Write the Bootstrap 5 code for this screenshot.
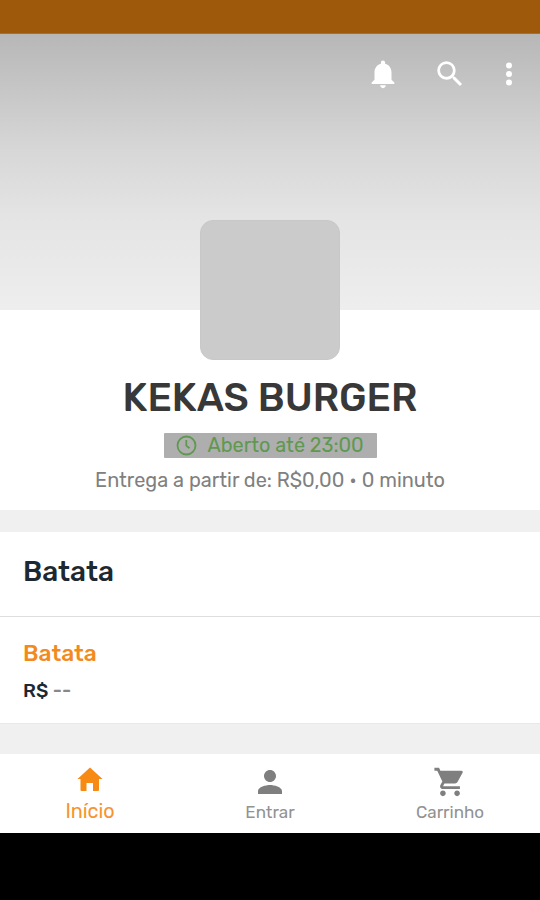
<!DOCTYPE html>
<html lang="pt-BR">
<head>
<meta charset="utf-8">
<meta name="viewport" content="width=device-width, initial-scale=1">
<title>Kekas Burger</title>
<link href="https://cdn.jsdelivr.net/npm/bootstrap@5.3.0/dist/css/bootstrap.min.css" rel="stylesheet">
<style>
body{font-family:Rubik,Roboto,sans-serif;background:#f0f0f0;height:900px;overflow:hidden}
svg{display:block;fill:currentColor;flex:none}
.statusbar{height:34px;background:#9e5a0a;border-bottom:1px solid #a1703b}
.cover{height:276px;background:linear-gradient(#b7b7b7 0,#c6c6c6 20%,#d7d7d7 42%,#e4e4e4 66%,#eee 100%);padding:22.500px 14px 0 0}
.tools svg:first-child{margin-right:33px}
.tools svg:last-child{margin-left:25px}
.shop{height:200px}
.logo{width:140px;height:140px;border-radius:13px;background:#cbcbcb;margin-top:-90px;border:1px solid #c8c8c8;flex:none}
.shop-name{font-size:39.3px;line-height:44px;font-weight:500;color:#383838;margin-top:16px}
.open{width:213px;height:25px;background:#aeaeae;color:#5f9850;font-size:19.850px;line-height:25px;margin-top:13px;padding-left:12px;border-radius:1px;gap:11px}
.delivery{font-size:19.900px;line-height:24px;color:#808080;margin-top:10px}
.menu{margin-top:22px;height:192px;color:#1c2932;border-bottom:1px solid #e8e8e8}
.menu-title{height:85px;border-bottom:1px solid #dedede;font-size:28px;font-weight:500;padding:0 0 5px 23px}
.dish{padding:24px 0 0 23px}
.dish-name{color:#f38a1e;font-size:22.700px;line-height:26px;font-weight:500}
.dish-price{font-size:19.200px;line-height:24px;font-weight:500;margin-top:12px}
.dish-price span{color:#888}
.tabs{margin-top:30px;height:79px;font-size:17px;color:#7f7f7f}
.tabs span{line-height:22px;color:#929292}
.tabs .tab-on{color:#f68a15;font-size:19.800px;padding-top:10px}
.tabs .tab-on span{margin-top:8px;color:#f7942c}
.tab-user{padding-top:10px}
.tab-user span{margin-top:1px}
.tab-cart{padding-top:11px}
.tab-cart span{margin-top:2px}
.system{height:67px;background:#000}
</style>
</head>
<body class="d-flex flex-column">
<div class="statusbar flex-shrink-0"></div>
<header class="cover flex-shrink-0">
  <div class="tools d-flex justify-content-end text-white">
    <svg width="34" height="34" viewBox="0 0 24 24"><path d="M12 22c1.100 0 2-.9 2-2h-4c0 1.100.9 2 2 2zm6-6v-5c0-3.070-1.630-5.640-4.500-6.320V4c0-.83-.67-1.500-1.500-1.500s-1.500.67-1.500 1.500v.68C7.640 5.360 6 7.920 6 11v5l-2 2v1h16v-1l-2-2z"/></svg>
    <svg width="34" height="34" viewBox="0 0 24 24"><path d="M15.500 14h-.79l-.28-.27A6.470 6.470 0 0 0 16 9.500 6.500 6.500 0 1 0 9.500 16c1.610 0 3.090-.59 4.230-1.570l.27.28v.79l5 4.990L20.490 19l-4.990-5zm-6 0C7.010 14 5 11.990 5 9.500S7.010 5 9.500 5 14 7.010 14 9.500 11.990 14 9.500 14z"/></svg>
    <svg width="34" height="34" viewBox="0 0 24 24"><circle cx="12" cy="6" r="2.100"/><circle cx="12" cy="12" r="2.100"/><circle cx="12" cy="18" r="2.100"/></svg>
  </div>
</header>
<section class="shop bg-white d-flex flex-column align-items-center flex-shrink-0">
  <div class="logo"></div>
  <h1 class="shop-name mb-0">KEKAS BURGER</h1>
  <div class="open d-flex align-items-center">
    <svg width="21" height="21" viewBox="0 0 21 21" stroke="currentColor" stroke-width="1.800"><circle cx="10.500" cy="10.500" r="9" fill="none"/><path d="M10.300 5v5.600l3.200 2.600" fill="none"/></svg>
    <span>Aberto até 23:00</span>
  </div>
  <div class="delivery">Entrega a partir de: R$0,00 • 0 minuto</div>
</section>
<main class="menu bg-white flex-shrink-0">
  <h2 class="menu-title d-flex align-items-center mb-0">Batata</h2>
  <div class="dish">
    <div class="dish-name">Batata</div>
    <div class="dish-price">R$ <span>--</span></div>
  </div>
</main>
<nav class="tabs bg-white row g-0 text-center flex-shrink-0">
  <div class="col tab-on d-flex flex-column align-items-center">
    <svg width="28" height="28" viewBox="0 0 28 28"><path d="M14 3.500 1.500 15h3v11q0 1 1 1h5v-8h6.500v8h5q1 0 1-1V15h3.500z"/></svg>
    <span>Início</span>
  </div>
  <div class="col tab-user d-flex flex-column align-items-center">
    <svg width="36" height="36" viewBox="0 0 24 24"><path d="M12 12c2.210 0 4-1.790 4-4s-1.790-4-4-4-4 1.790-4 4 1.790 4 4 4zm0 2c-2.670 0-8 1.340-8 4v2h16v-2c0-2.660-5.330-4-8-4z"/></svg>
    <span>Entrar</span>
  </div>
  <div class="col tab-cart d-flex flex-column align-items-center">
    <svg width="34" height="34" viewBox="0 0 24 24"><path d="M7 18c-1.100 0-1.990.9-1.990 2S5.900 22 7 22s2-.9 2-2-.9-2-2-2zM1 2v2h2l3.600 7.590-1.350 2.450C4.520 15.370 5.480 17 7 17h12v-2H7.420c-.14 0-.25-.11-.25-.25l.03-.12.900-1.630h7.450c.75 0 1.410-.41 1.750-1.030l3.580-6.490A1 1 0 0 0 20 4H5.210l-.94-2H1zm16 16c-1.100 0-1.990.9-1.990 2s.89 2 1.990 2 2-.9 2-2-.9-2-2-2z"/></svg>
    <span>Carrinho</span>
  </div>
</nav>
<div class="system flex-shrink-0"></div>
<script src="https://cdn.jsdelivr.net/npm/bootstrap@5.3.0/dist/js/bootstrap.bundle.min.js"></script>
</body>
</html>
